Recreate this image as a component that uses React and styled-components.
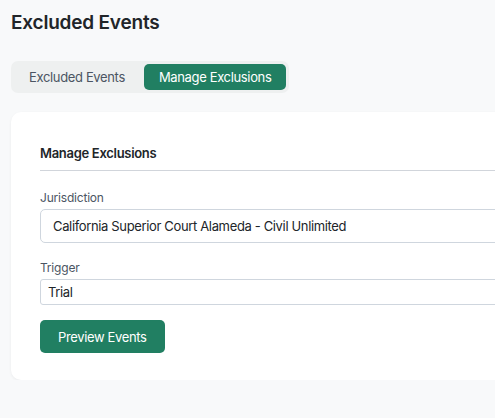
import React, { useState } from 'react'
import styled, { createGlobalStyle } from 'styled-components'

const GlobalStyle = createGlobalStyle`
  html, body {
    margin: 0;
    padding: 0;
    overflow: hidden;
    background: #f8f9fa;
  }
  body {
    font-family: Inter, "Noto Sans", sans-serif;
    color: #1f2328;
  }
`

const Page = styled.div`
  padding: 11px 0 0 11px;
  width: 640px;
  box-sizing: border-box;
`

const PageTitle = styled.h1`
  margin: 0;
  font-size: 19px;
  font-weight: 600;
  line-height: 24px;
  letter-spacing: -0.2px;
  color: #212529;
`

const TabBar = styled.div`
  display: inline-flex;
  align-items: center;
  margin-top: 26px;
  padding: 3px;
  gap: 4px;
  background: #eef0f0;
  border-radius: 7px;
`

const Tab = styled.button`
  border: none;
  cursor: pointer;
  font-family: inherit;
  font-size: 13px;
  letter-spacing: -0.35px;
  line-height: 1;
  height: 26px;
  padding: 0 15px;
  border-radius: 5px;
  color: ${({ $active }) => ($active ? '#ffffff' : '#4b5563')};
  background: ${({ $active }) => ($active ? '#217f62' : 'transparent')};
`

const Card = styled.section`
  margin-top: 19px;
  background: #ffffff;
  border-radius: 10px;
  box-shadow: 0 1px 3px rgba(16, 24, 40, 0.06);
  padding: 32px 0 27px 29px;
`

const CardTitle = styled.h2`
  margin: 0;
  font-size: 13px;
  font-weight: 600;
  letter-spacing: -0.3px;
  line-height: 18px;
  color: #212529;
  padding-bottom: 8px;
  border-bottom: 1px solid #d1d5db;
`

const Field = styled.div`
  display: flex;
  flex-direction: column;
  margin-top: ${({ $gap }) => $gap}px;
`

const Label = styled.label`
  font-size: 12px;
  letter-spacing: -0.2px;
  line-height: 16px;
  color: #4b5563;
  margin-bottom: 3px;
`

const TextInput = styled.input`
  box-sizing: border-box;
  height: 34px;
  padding: 0 12px;
  border: 1px solid #cfd6de;
  border-radius: 5px;
  font-family: inherit;
  font-size: 13px;
  letter-spacing: -0.35px;
  color: #212529;
  outline: none;
`

const Select = styled.select`
  box-sizing: border-box;
  height: 26px;
  padding: 0 7px;
  border: 1px solid #cfd6de;
  border-radius: 3px;
  font-family: inherit;
  font-size: 13px;
  letter-spacing: -0.35px;
  color: #212529;
  background: #ffffff;
  appearance: none;
  outline: none;
`

const PrimaryButton = styled.button`
  align-self: flex-start;
  margin-top: 15px;
  height: 33px;
  padding: 0 18px;
  border: none;
  border-radius: 5px;
  background: #217f62;
  color: #ffffff;
  font-family: inherit;
  font-size: 13px;
  letter-spacing: -0.35px;
  cursor: pointer;
`

const Form = styled.div`
  display: flex;
  flex-direction: column;
`

const App = () => {
  const [tab, setTab] = useState('manage')
  const [jurisdiction, setJurisdiction] = useState(
    'California Superior Court Alameda - Civil Unlimited'
  )
  const [trigger, setTrigger] = useState('Trial')

  return (
    <Page>
      <GlobalStyle />
      <PageTitle>Excluded Events</PageTitle>
      <TabBar>
        <Tab $active={tab === 'excluded'} onClick={() => setTab('excluded')}>
          Excluded Events
        </Tab>
        <Tab $active={tab === 'manage'} onClick={() => setTab('manage')}>
          Manage Exclusions
        </Tab>
      </TabBar>

      <Card>
        <CardTitle>Manage Exclusions</CardTitle>
        <Form>
          <Field $gap={19}>
            <Label htmlFor="jurisdiction">Jurisdiction</Label>
            <TextInput
              id="jurisdiction"
              value={jurisdiction}
              onChange={(e) => setJurisdiction(e.target.value)}
            />
          </Field>
          <Field $gap={17}>
            <Label htmlFor="trigger">Trigger</Label>
            <Select
              id="trigger"
              value={trigger}
              onChange={(e) => setTrigger(e.target.value)}
            >
              <option value="Trial">Trial</option>
            </Select>
          </Field>
          <PrimaryButton>Preview Events</PrimaryButton>
        </Form>
      </Card>
    </Page>
  )
}

export default App
